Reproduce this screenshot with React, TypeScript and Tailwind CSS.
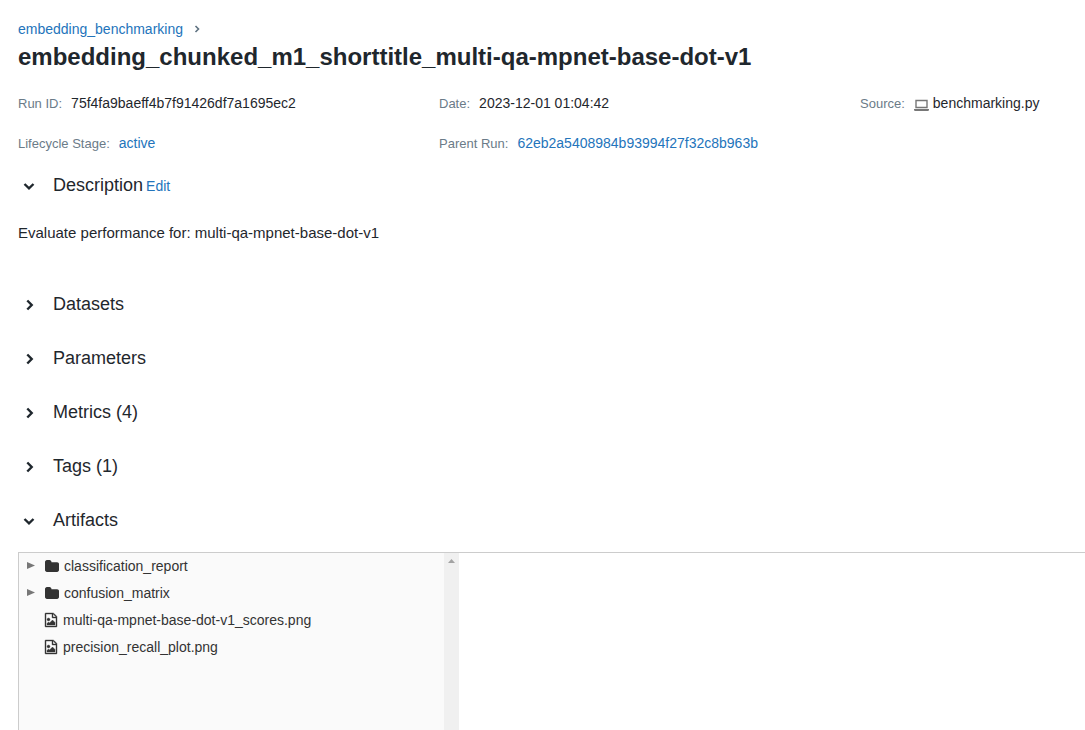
import React from 'react';

const link = 'text-[#2374bb] hover:underline';

function Chevron({ open }: { open?: boolean }) {
  return (
    <svg className="mt-px h-3 w-3 shrink-0" viewBox="0 0 12 12" fill="none" stroke="#1f272d" strokeWidth="2.4" aria-hidden="true">
      <path d={open ? 'M1.5 4L6 8.3 10.500 4' : 'M4.300 1.500L8.700 6l-4.400 4.500'} />
    </svg>
  );
}

function LaptopIcon() {
  return (
    <svg className="mt-1 mr-1 h-3 w-[15px] shrink-0" viewBox="0 0 15 12" fill="none" stroke="#777" aria-hidden="true">
      <path d="M2 1.500h11v7H2z" strokeWidth="1.4" />
      <path d="M0 10h15v.8a1.200 1.200 0 0 1-1.200 1.200H1.200A1.200 1.200 0 0 1 0 10.800z" fill="#777" stroke="none" />
    </svg>
  );
}

function FolderIcon() {
  return (
    <svg className="mr-[5px] h-3 w-[14px] shrink-0" viewBox="0 128 1664 1408" fill="#333" aria-hidden="true">
      <path d="M1664 608v704q0 92-66 158t-158 66h-1216q-92 0-158-66t-66-158v-960q0-92 66-158t158-66h320q92 0 158 66t66 158v32h672q92 0 158 66t66 158z" />
    </svg>
  );
}

function ImageFileIcon() {
  return (
    <svg className="mr-[6px] h-[14px] w-3 shrink-0 overflow-visible" viewBox="0 0 1536 1792" fill="#333" stroke="#333" strokeWidth="50" aria-hidden="true">
      <path d="M1468 380q28 28 48 76t20 88v1152q0 40-28 68t-68 28h-1344q-40 0-68-28t-28-68v-1600q0-40 28-68t68-28h896q40 0 88 20t76 48zm-444-244v376h376q-10-29-22-41l-313-313q-12-12-41-22zm384 1528v-1024h-416q-40 0-68-28t-28-68v-416h-768v1536h1280zm-128-448v320h-1024v-192l192-192 128 128 384-384zm-832-192q-80 0-136-56t-56-136 56-136 136-56 136 56 56 136-56 136-136 56z" />
    </svg>
  );
}

function Meta({ label, children }: { label: string; children: React.ReactNode }) {
  return (
    <div className="flex h-5 items-center whitespace-nowrap">
      <dt className="mr-[9px] pt-px text-[13px] text-[#6b7b88]">{label}:</dt>
      <dd className="flex items-center">{children}</dd>
    </div>
  );
}

function SectionHeader({ title, open, children }: { title: string; open?: boolean; children?: React.ReactNode }) {
  return (
    <div className="flex h-6 items-center pl-[5px]">
      <button type="button" aria-expanded={!!open} className="flex items-center gap-[18px] text-lg leading-6">
        <Chevron open={open} />
        {title}
      </button>
      {children}
    </div>
  );
}

const artifacts = [
  { name: 'classification_report', folder: true },
  { name: 'confusion_matrix', folder: true },
  { name: 'multi-qa-mpnet-base-dot-v1_scores.png', folder: false },
  { name: 'precision_recall_plot.png', folder: false },
];

export default function App() {
  return (
    <main className="flex min-h-screen flex-col overflow-x-hidden bg-white pt-[19px] pl-[18px] font-['Liberation_Sans',Arial,sans-serif] text-sm leading-5 text-[#1f272d]">
      <nav aria-label="Breadcrumb" className="flex items-center gap-[10px]">
        <a href="#experiment" className={link}>embedding_benchmarking</a>
        <svg className="h-2 w-2" viewBox="0 0 8 8" fill="none" stroke="#5f7281" strokeWidth="1.6" aria-hidden="true">
          <path d="M2.500 1L5.500 4l-3 3" />
        </svg>
      </nav>
      <h1 className="mt-0.5 text-2xl leading-8 font-bold">embedding_chunked_m1_shorttitle_multi-qa-mpnet-base-dot-v1</h1>

      <dl className="mt-5 grid grid-cols-[421px_421px_1fr] gap-y-5">
        <Meta label="Run ID">75f4fa9baeff4b7f91426df7a1695ec2</Meta>
        <Meta label="Date">2023-12-01 01:04:42</Meta>
        <Meta label="Source"><LaptopIcon />benchmarking.py</Meta>
        <Meta label="Lifecycle Stage"><a href="#active" className={link}>active</a></Meta>
        <Meta label="Parent Run"><a href="#parent" className={link}>62eb2a5408984b93994f27f32c8b963b</a></Meta>
      </dl>

      <section className="mt-5">
        <SectionHeader title="Description" open>
          <button type="button" className="ml-[3px] pt-0.5 text-[#2374bb]">Edit</button>
        </SectionHeader>
        <p className="mt-[26px] text-[15px]">Evaluate performance for: multi-qa-mpnet-base-dot-v1</p>
      </section>

      <div className="mt-[49px] flex flex-col gap-[30px]">
        <SectionHeader title="Datasets" />
        <SectionHeader title="Parameters" />
        <SectionHeader title="Metrics (4)" />
        <SectionHeader title="Tags (1)" />
        <SectionHeader title="Artifacts" open />
      </div>

      <div className="mt-5 flex flex-1 border-t border-l border-[#ccc]">
        <div className="flex w-[440px] bg-[#fafafa]">
          <ul className="flex-1 text-[#333]">
            {artifacts.map((item) => (
              <li key={item.name}>
                <button type="button" className="flex h-[27px] w-full items-center pb-0.5 pl-2">
                  <span className="mr-[10px] flex w-2">
                    {item.folder && (
                      <svg className="h-[7px] w-2" viewBox="0 0 8 7" fill="#777" aria-hidden="true"><path d="M0 0l8 3.500L0 7z" /></svg>
                    )}
                  </span>
                  {item.folder ? <FolderIcon /> : <ImageFileIcon />}
                  {item.name}
                </button>
              </li>
            ))}
          </ul>
          <div className="flex w-[15px] justify-center bg-[#f0f0f0] pt-[6px]">
            <svg className="h-1 w-[7px]" viewBox="0 0 7 4" fill="#a3a3a3" aria-hidden="true"><path d="M0 4l3.500-4L7 4z" /></svg>
          </div>
        </div>
      </div>
    </main>
  );
}
